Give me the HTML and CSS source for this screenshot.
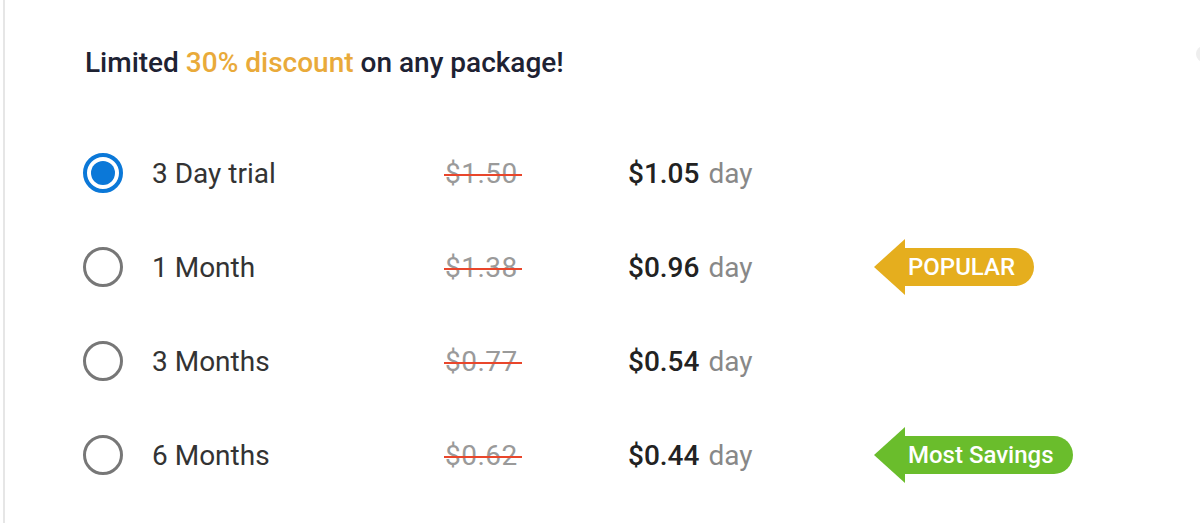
FILE: index.html
```html
<!DOCTYPE html>
<html lang="en">
<head>
<meta charset="UTF-8">
<meta name="viewport" content="width=device-width, initial-scale=1.0">
<title>Choose a package</title>
<link rel="stylesheet" href="styles.css">
</head>
<body>
<div id="app">
  <div class="panel">
    <h2 class="promo">Limited <span class="promo-hl">30% discount</span> on any package!</h2>

    <div class="plans">
      <label class="plan">
        <span class="radio checked"></span>
        <span class="plan-name">3 Day trial</span>
        <span class="old-price">$1.50</span>
        <span class="new-price"><b>$1.05</b> day</span>
        <span></span>
      </label>

      <label class="plan">
        <span class="radio"></span>
        <span class="plan-name">1 Month</span>
        <span class="old-price">$1.38</span>
        <span class="new-price"><b>$0.96</b> day</span>
        <span class="badge badge-yellow"><span class="badge-text">POPULAR</span></span>
      </label>

      <label class="plan">
        <span class="radio"></span>
        <span class="plan-name">3 Months</span>
        <span class="old-price">$0.77</span>
        <span class="new-price"><b>$0.54</b> day</span>
        <span></span>
      </label>

      <label class="plan">
        <span class="radio"></span>
        <span class="plan-name">6 Months</span>
        <span class="old-price">$0.62</span>
        <span class="new-price"><b>$0.44</b> day</span>
        <span class="badge badge-green"><span class="badge-text">Most Savings</span></span>
      </label>
    </div>
  </div>
  <span class="edge-dot"></span>
</div>
</body>
</html>
```

FILE: styles.css
```css
html, body {
  margin: 0;
  padding: 0;
  font-family: Roboto, 'Liberation Sans', Arial, sans-serif;
  background-color: #fff;
  color: #222;
}

#app {
  position: relative;
  height: 523px;
  overflow: hidden;
}

.panel {
  margin-left: 3px;
  height: 100%;
  border-left: 2px solid #e6e6e6;
  padding: 45px 0 0 78px;
  box-sizing: border-box;
}

.promo {
  margin: 0 0 0 2px;
  font-size: 28px;
  font-weight: 500;
  color: #1e2233;
  line-height: 36px;
}

.promo-hl {
  color: #e9aa3a;
}

.plans {
  margin-top: 64px;
  display: flex;
  flex-direction: column;
  gap: 38px;
}

.plan {
  display: grid;
  grid-template-columns: 69px 292px 184px 246px auto;
  align-items: center;
  height: 56px;
  font-size: 28px;
}

.radio {
  width: 40px;
  height: 40px;
  box-sizing: border-box;
  border: 3px solid #777;
  border-radius: 50%;
  display: flex;
  align-items: center;
  justify-content: center;
}

.radio.checked {
  border: 4px solid #0b78d8;
}

.radio.checked::after {
  content: '';
  width: 24px;
  height: 24px;
  border-radius: 50%;
  background-color: #0b78d8;
}

.plan-name {
  color: #333;
}

.old-price {
  position: relative;
  color: #9a9a9a;
  justify-self: start;
  padding: 0 4px 0 1px;
  letter-spacing: 0.5px;
}

.old-price::after {
  content: '';
  position: absolute;
  left: 0;
  right: 0;
  top: 52%;
  height: 2px;
  background-color: #e9462b;
}

.new-price {
  color: #888;
}

.new-price b {
  color: #222;
  font-weight: 500;
  margin-right: 2px;
}

/* arrow shaped tags */
.badge {
  display: flex;
  align-items: center;
  justify-self: start;
  height: 56px;
}

.badge::before {
  content: '';
  border-top: 28px solid transparent;
  border-bottom: 28px solid transparent;
  border-right: 31px solid currentColor;
}

.badge-text {
  height: 38px;
  line-height: 38px;
  padding: 0 19px 0 3px;
  border-radius: 0 19px 19px 0;
  font-size: 24px;
  font-weight: 500;
  color: #fff;
}

.badge-yellow { color: #e5ae1e; }
.badge-yellow .badge-text { background-color: #e5ae1e; }

.badge-green { color: #6abd2c; }
.badge-green .badge-text { background-color: #6abd2c; }

.edge-dot {
  position: absolute;
  right: -12px;
  top: 46px;
  width: 16px;
  height: 16px;
  border-radius: 50%;
  background-color: #eee;
}
```
